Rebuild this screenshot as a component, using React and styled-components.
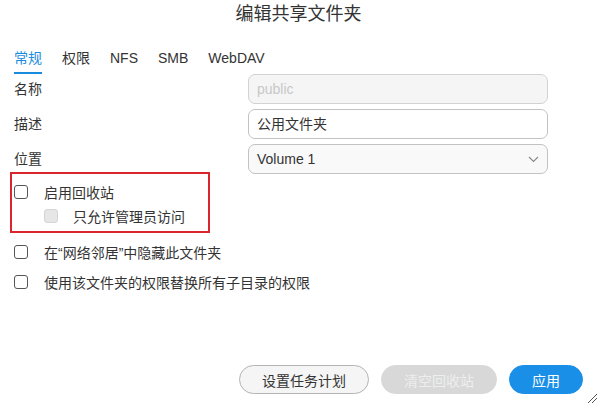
import styled, { createGlobalStyle } from "styled-components";

const GlobalStyle = createGlobalStyle`
  html, body {
    margin: 0;
    padding: 0;
    background: #fff;
  }
  body {
    font-family: "Liberation Sans", "Noto Sans CJK SC", sans-serif;
    color: #333;
  }
`;

const Dialog = styled.div`
  position: relative;
  width: 597px;
  height: 403px;
  box-sizing: border-box;
  padding: 0 14px 9px 14px;
  display: flex;
  flex-direction: column;
  overflow: hidden;
`;

const Title = styled.h2`
  margin: 0;
  height: 28px;
  line-height: 28px;
  text-align: center;
  font-size: 18px;
  font-weight: 400;
  color: #333;
`;

const Tabs = styled.div`
  display: flex;
  gap: 20px;
  margin-top: 16px;
  height: 30px;
`;

const Tab = styled.div`
  font-size: 14px;
  line-height: 28px;
  height: 28px;
  color: ${(p) => (p.$active ? "#1a8ce0" : "#333")};
  border-bottom: 2px solid ${(p) => (p.$active ? "#1a8ce0" : "transparent")};
`;

const Form = styled.div`
  display: grid;
  grid-template-columns: 234px 300px;
  row-gap: 5px;
`;

const Label = styled.div`
  font-size: 14px;
  line-height: 30px;
  color: #333;
`;

const Field = styled.div`
  height: 30px;
  box-sizing: border-box;
  border: 1px solid ${(p) => (p.$muted ? "#d2d2d2" : "#c2c2c2")};
  border-radius: 7px;
  background: ${(p) => (p.$muted ? "#f5f5f5" : p.$select ? "#f9f9f9" : "#fff")};
  padding: 0 8px;
  font-size: 14px;
  line-height: 28px;
  color: ${(p) => (p.$muted ? "#c8c8c8" : "#333")};
  display: flex;
  align-items: center;
  justify-content: space-between;
`;

const Chevron = () => (
  <svg width="11" height="7" viewBox="0 0 11 7">
    <path d="M1 1 L5.5 5.5 L10 1" fill="none" stroke="#888" strokeWidth="1.1" />
  </svg>
);

const Highlight = styled.div`
  width: 200px;
  box-sizing: border-box;
  margin: -2px 0 0 -4px;
  padding: 6px 0 3px 2px;
  border: 2px solid #d9262c;
`;

const CheckRow = styled.label`
  display: flex;
  align-items: center;
  height: ${(p) => (p.$tall ? "30px" : "24px")};
  padding-left: ${(p) => (p.$indent ? "30px" : "0")};
  font-size: 14px;
  color: #333;
`;

const Box = styled.span`
  width: 14px;
  height: 14px;
  box-sizing: border-box;
  border-radius: 3px;
  border: 1px solid ${(p) => (p.$disabled ? "#d4d4d4" : "#555")};
  background: ${(p) => (p.$disabled ? "#e6e6e6" : "#fff")};
  margin-right: ${(p) => (p.$disabled ? "15px" : "16px")};
  flex: none;
`;

const Others = styled.div`
  margin-top: 4px;
`;

const Footer = styled.div`
  margin-top: auto;
  display: flex;
  justify-content: flex-end;
  gap: 12px;
`;

const Button = styled.button`
  height: 29px;
  padding: 0 22px;
  border-radius: 15px;
  font-family: inherit;
  font-size: 14px;
  white-space: nowrap;
  border: 1px solid
    ${(p) => (p.$variant === "primary" ? "#1a8fe8" : p.$variant === "disabled" ? "#d8d8d8" : "#b4b4b4")};
  background: ${(p) =>
    p.$variant === "primary" ? "#1a8fe8" : p.$variant === "disabled" ? "#d8d8d8" : "#f5f5f5"};
  color: ${(p) => (p.$variant === "primary" ? "#fff" : p.$variant === "disabled" ? "#eeeeee" : "#333")};
`;

const Grip = styled.svg`
  position: absolute;
  right: 0;
  bottom: 0;
`;

export default function App() {
  return (
    <>
      <GlobalStyle />
      <Dialog>
        <Title>编辑共享文件夹</Title>
        <Tabs>
          <Tab $active>常规</Tab>
          <Tab>权限</Tab>
          <Tab>NFS</Tab>
          <Tab>SMB</Tab>
          <Tab>WebDAV</Tab>
        </Tabs>
        <Form>
          <Label>名称</Label>
          <Field $muted>public</Field>
          <Label>描述</Label>
          <Field>公用文件夹</Field>
          <Label>位置</Label>
          <Field $select>
            Volume 1
            <Chevron />
          </Field>
        </Form>
        <Highlight>
          <CheckRow>
            <Box />
            启用回收站
          </CheckRow>
          <CheckRow $indent>
            <Box $disabled />
            只允许管理员访问
          </CheckRow>
        </Highlight>
        <Others>
          <CheckRow $tall>
            <Box />
            在“网络邻居”中隐藏此文件夹
          </CheckRow>
          <CheckRow $tall>
            <Box />
            使用该文件夹的权限替换所有子目录的权限
          </CheckRow>
        </Others>
        <Footer>
          <Button>设置任务计划</Button>
          <Button $variant="disabled">清空回收站</Button>
          <Button $variant="primary">应用</Button>
        </Footer>
        <Grip width="10" height="9" viewBox="0 0 10 9">
          <path d="M1 9 L10 0 M5 9 L10 4" stroke="#555" strokeWidth="1" />
        </Grip>
      </Dialog>
    </>
  );
}
